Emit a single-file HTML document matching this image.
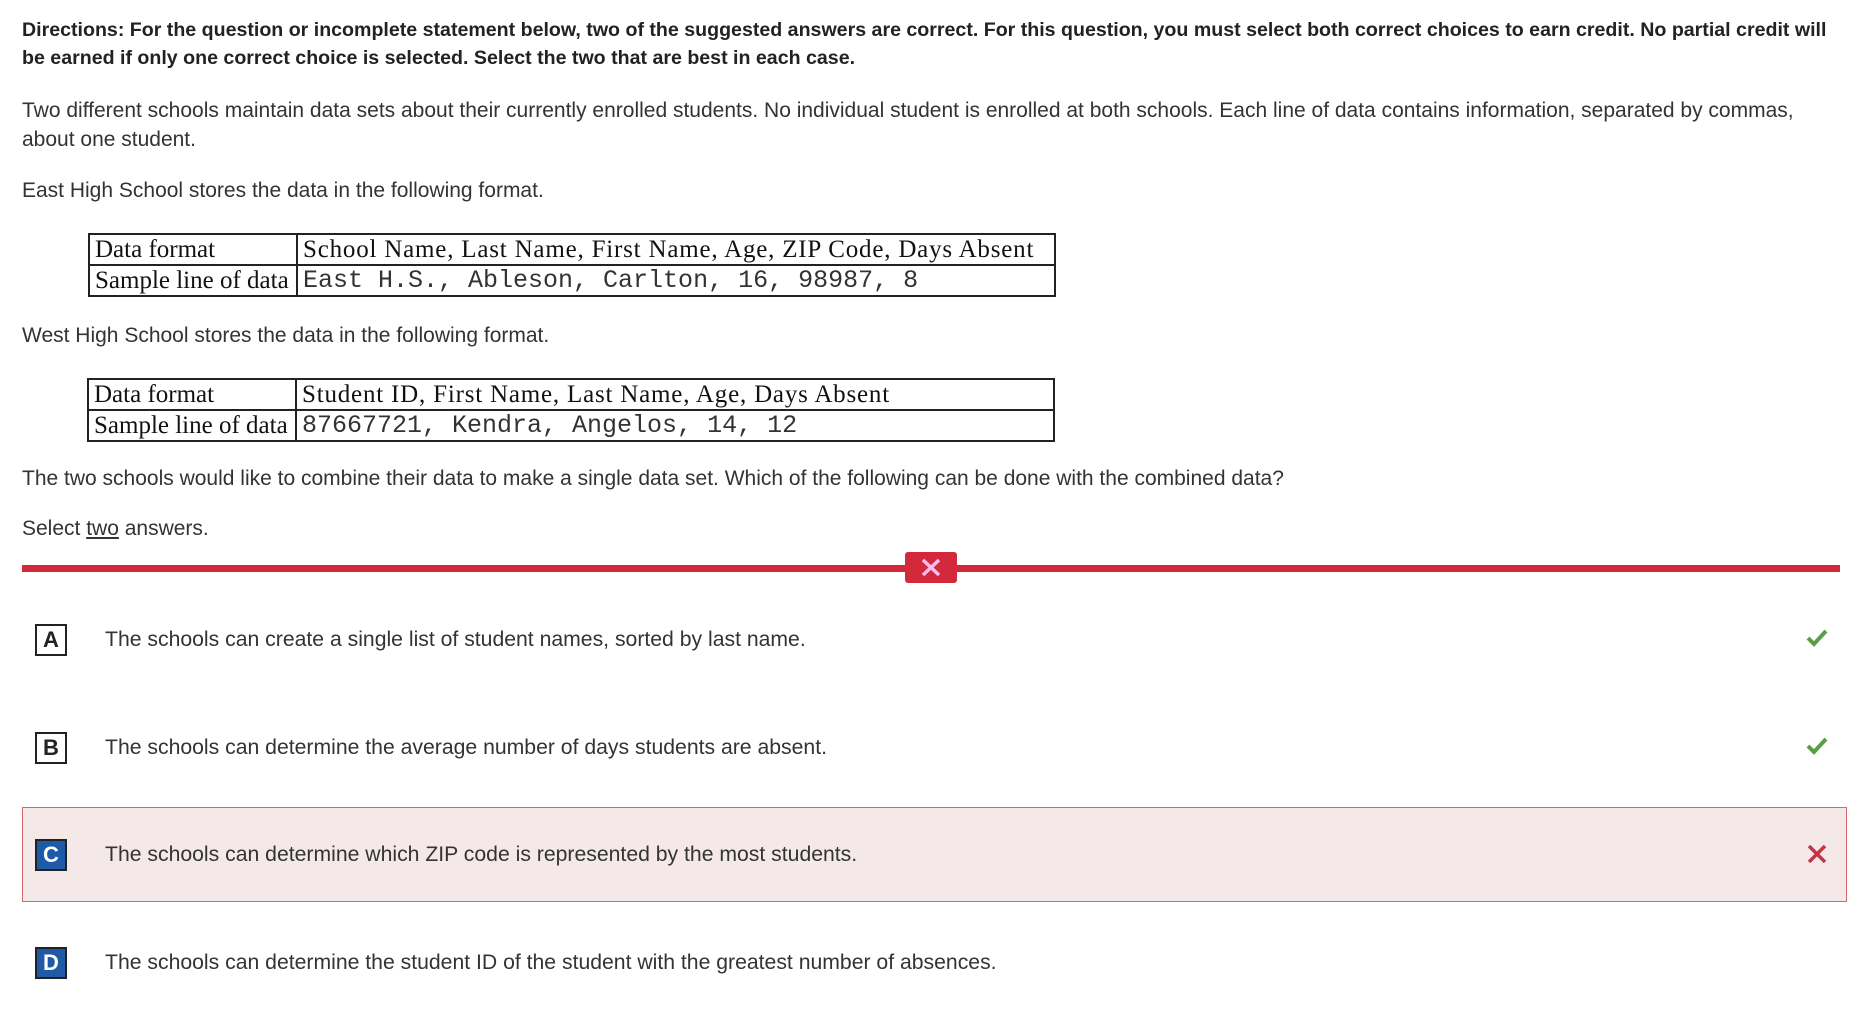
<!DOCTYPE html>
<html><head><meta charset="utf-8"><style>
body{margin:0;width:1866px;height:1020px;background:#fff;position:relative;overflow:hidden;font-family:"Liberation Sans",Arial,sans-serif;color:#333;}
.t{position:absolute;left:22px;font-size:21px;line-height:29px;white-space:nowrap}
.b{font-weight:bold;color:#222;font-size:19.6px}
table{position:absolute;border-collapse:collapse;font-family:"Liberation Serif",serif;font-size:25px;color:#111}
td{border:2px solid #222;padding:0 5px;height:29px;line-height:27px;white-space:nowrap}
.h{letter-spacing:0.8px}
.m{font-family:"Liberation Mono",monospace;font-size:25px;color:#333;letter-spacing:0}
.opt{position:absolute;left:105px;font-size:21.2px;line-height:30px;white-space:nowrap;color:#333}
.box{position:absolute;left:35px;width:28px;height:28px;border:2px solid #222;font-weight:bold;font-size:22px;line-height:28px;text-align:center;color:#222}
.sel{background:#1e5aa8;color:#fff}
</style></head><body>
<div class="t b" style="top:16px">Directions: For the question or incomplete statement below, two of the suggested answers are correct. For this question, you must select both correct choices to earn credit. No partial credit will</div>
<div class="t b" style="top:44px">be earned if only one correct choice is selected. Select the two that are best in each case.</div>
<div class="t" style="top:96px">Two different schools maintain data sets about their currently enrolled students. No individual student is enrolled at both schools. Each line of data contains information, separated by commas,</div>
<div class="t" style="top:125px">about one student.</div>
<div class="t" style="top:176px">East High School stores the data in the following format.</div>
<table style="left:88px;top:233px;width:968px"><tr><td style="width:196px">Data format</td><td class="h">School Name, Last Name, First Name, Age, ZIP Code, Days Absent</td></tr><tr><td>Sample line of data</td><td class="m">East H.S., Ableson, Carlton, 16, 98987, 8</td></tr></table>
<div class="t" style="top:321px">West High School stores the data in the following format.</div>
<table style="left:87px;top:378px;width:968px"><tr><td style="width:196px">Data format</td><td class="h">Student ID, First Name, Last Name, Age, Days Absent</td></tr><tr><td>Sample line of data</td><td class="m">87667721, Kendra, Angelos, 14, 12</td></tr></table>
<div class="t" style="top:464px">The two schools would like to combine their data to make a single data set. Which of the following can be done with the combined data?</div>
<div class="t" style="top:514px">Select <u>two</u> answers.</div>
<div style="position:absolute;left:22px;top:565px;width:1818px;height:7px;background:#d22a3a"></div>
<div style="position:absolute;left:905px;top:552px;width:52px;height:31px;background:#d22a3a;border-radius:3px"><svg width="52" height="31"><path d="M18 8L34 23M34 8L18 23" stroke="#fbe" stroke-width="3.5"/></svg></div>
<div class="box" style="top:624px">A</div><div class="opt" style="top:625px">The schools can create a single list of student names, sorted by last name.</div>
<svg style="position:absolute;left:1806px;top:628px" width="22" height="20"><path d="M2 10L8 16L20 3" stroke="#5a9e45" stroke-width="4" fill="none"/></svg>
<div class="box" style="top:732px">B</div><div class="opt" style="top:733px">The schools can determine the average number of days students are absent.</div>
<svg style="position:absolute;left:1806px;top:736px" width="22" height="20"><path d="M2 10L8 16L20 3" stroke="#5a9e45" stroke-width="4" fill="none"/></svg>
<div style="position:absolute;left:22px;top:807px;width:1823px;height:93px;background:#f4e8e9;border:1px solid #d9646e"></div>
<div class="box sel" style="top:839px">C</div><div class="opt" style="top:840px">The schools can determine which ZIP code is represented by the most students.</div>
<svg style="position:absolute;left:1807px;top:845px" width="20" height="18"><path d="M2 1L18 17M18 1L2 17" stroke="#c23645" stroke-width="3.5"/></svg>
<div class="box sel" style="top:947px">D</div><div class="opt" style="top:948px">The schools can determine the student ID of the student with the greatest number of absences.</div>
</body></html>
